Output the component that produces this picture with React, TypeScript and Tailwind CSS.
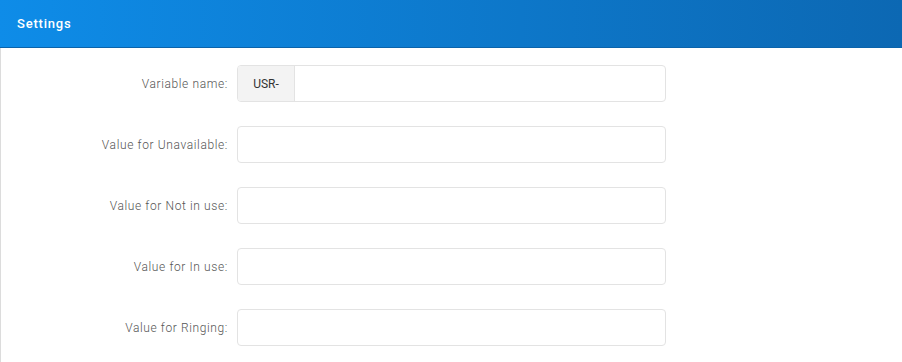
export default function App() {
  const rows = [
    { label: 'Variable name:', addon: 'USR-' },
    { label: 'Value for Unavailable:' },
    { label: 'Value for Not in use:' },
    { label: 'Value for In use:' },
    { label: 'Value for Ringing:' },
  ]

  return (
    <div className="w-[902px] h-[362px] overflow-hidden bg-white font-['Roboto',sans-serif]">
      <div className="h-12 flex items-center px-[17px] bg-gradient-to-r from-[#0e8ce8] to-[#0c68b3] border-b border-[#0b63aa]">
        <span className="text-white text-[13px] font-medium tracking-[0.8px]">Settings</span>
      </div>
      <div className="border-l border-[#dcdcdc] h-full pt-[17px] flex flex-col gap-[24px]">
        {rows.map((r) => (
          <div key={r.label} className="flex items-center">
            <label className="w-[236px] pr-[9px] text-right text-[12px] font-light text-[#555] tracking-[0.62px]">
              {r.label}
            </label>
            <div className="w-[429px] h-[37px] flex border border-[#e3e3e3] rounded-[4px] overflow-hidden">
              {r.addon && (
                <span className="w-[57px] flex items-center justify-center bg-[#f3f3f3] border-r border-[#e3e3e3] text-[12px] text-[#333]">
                  {r.addon}
                </span>
              )}
              <input type="text" className="flex-1 outline-none px-3 text-[12px]" />
            </div>
          </div>
        ))}
      </div>
    </div>
  )
}
